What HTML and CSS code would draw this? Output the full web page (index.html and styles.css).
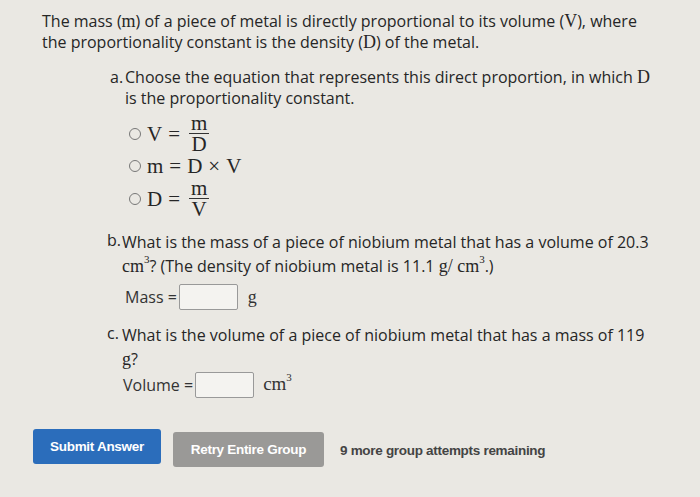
FILE: index.html
```html
<!DOCTYPE html>
<html>
<head>
<meta charset="utf-8">
<link rel="stylesheet" href="styles.css">
</head>
<body>
<div class="page">
  <p class="intro">The mass (<span class="m">m</span>) of a piece of metal is directly proportional to its volume (<span class="m">V</span>), where the proportionality constant is the density (<span class="m">D</span>) of the metal.</p>

  <div class="part part-a">
    <div class="q"><span class="lbl">a.</span><span class="qt">Choose the equation that represents this direct proportion, in which <span class="m">D</span> is the proportionality constant.</span></div>
    <div class="options">
      <div class="opt"><span class="radio"></span><span class="m">V</span><span class="m eq">=</span><span class="frac"><span class="num m">m</span><span class="den m">D</span></span></div>
      <div class="opt opt-mid"><span class="radio"></span><span class="m">m</span><span class="m eq">=</span><span class="m">D</span><span class="m eq">×</span><span class="m">V</span></div>
      <div class="opt opt-last"><span class="radio"></span><span class="m">D</span><span class="m eq">=</span><span class="frac"><span class="num m">m</span><span class="den m">V</span></span></div>
    </div>
  </div>

  <div class="part part-b">
    <div class="q"><span class="lbl">b.</span><span class="qt">What is the mass of a piece of niobium metal that has a volume of 20.3 <span class="m">cm<sup>3</sup></span>? (The density of niobium metal is 11.1 <span class="m">g/ cm<sup>3</sup></span>.)</span></div>
    <div class="ans ans-b">Mass = <span class="box"></span><span class="m unit">g</span></div>
  </div>

  <div class="part part-c">
    <div class="q"><span class="lbl">c.</span><span class="qt">What is the volume of a piece of niobium metal that has a mass of 119 <span class="m">g</span>?</span></div>
    <div class="ans ans-c">Volume = <span class="box"></span><span class="m unit">cm<sup>3</sup></span></div>
  </div>

  <div class="actions">
    <button class="btn btn-submit">Submit Answer</button>
    <button class="btn btn-retry">Retry Entire Group</button>
    <span class="remain">9 more group attempts remaining</span>
  </div>
</div>
</body>
</html>
```

FILE: styles.css
```css
html, body {
  margin: 0;
  padding: 0;
  background: #eae8e3;
}
body {
  width: 700px;
  height: 497px;
  overflow: hidden;
  font-family: "Open Sans", "Noto Sans", sans-serif;
  color: #262626;
  font-size: 16px;
}
.page {
  padding: 11px 0 0 42px;
}
.intro {
  margin: 0;
  width: 600px;
  line-height: 21px;
}
.m {
  font-family: "Liberation Serif", "DejaVu Serif", serif;
  font-size: 18px;
  line-height: 1;
}
.m sup {
  font-size: 11px;
  line-height: 0;
  vertical-align: 9px;
}
.part-a {
  margin: 14px 0 0 68px;
}
.q {
  display: flex;
  line-height: 21px;
}
.lbl {
  flex: none;
  width: 15px;
}
.part-a .qt {
  width: 530px;
}
.options {
  margin: 5px 0 0 19px;
  display: flex;
  flex-direction: column;
}
.opt {
  display: flex;
  align-items: center;
  height: 40px;
}
.opt .m {
  font-size: 21px;
}
.opt-mid {
  height: 24px;
}
.opt-last {
  height: 42px;
}
.radio {
  width: 10px;
  height: 10px;
  border: 1px solid #777;
  border-radius: 50%;
  margin-right: 6px;
}
.eq {
  margin: 0 6px;
}
.frac {
  display: inline-flex;
  flex-direction: column;
  align-items: center;
  margin-left: 3px;
}
.opt .num {
  line-height: 19px;
  border-bottom: 1px solid #333;
  padding: 0 2px;
}
.opt .den {
  line-height: 21px;
}
.part-b {
  margin: 10px 0 0 65px;
}
.part-b .qt, .part-c .qt {
  width: 528px;
  line-height: 24px;
}
.ans {
  display: flex;
  align-items: center;
  margin-left: 18px;
  color: #333;
}
.ans-b {
  margin-top: 6px;
}
.box {
  display: inline-block;
  width: 57px;
  height: 24px;
  border: 1px solid #999;
  background: #f4f3f0;
  margin-left: 2px;
  border-radius: 2px;
}
.unit {
  margin-left: 10px;
}
.ans-c .unit {
  margin-left: 9px;
  margin-top: -4px;
  font-size: 19px;
}
.part-c {
  margin: 13px 0 0 65px;
}
.ans-c {
  margin-top: 1px;
  margin-left: 16px;
}
.actions {
  display: flex;
  align-items: flex-start;
  margin: 31px 0 0 -9px;
}
.btn {
  font-family: "Liberation Sans", Arial, sans-serif;
  font-weight: bold;
  font-size: 13.5px;
  color: #fff;
  border: none;
  border-radius: 3px;
  height: 35px;
  padding: 0;
  letter-spacing: -0.3px;
}
.btn-submit {
  background: #2b6dbb;
  width: 128px;
}
.btn-retry {
  background: #9a9997;
  width: 151px;
  margin-left: 12px;
  margin-top: 3px;
}
.remain {
  font-family: "Liberation Sans", Arial, sans-serif;
  font-weight: bold;
  font-size: 13.5px;
  color: #444;
  margin-left: 16px;
  margin-top: 14px;
  letter-spacing: -0.3px;
}
```
